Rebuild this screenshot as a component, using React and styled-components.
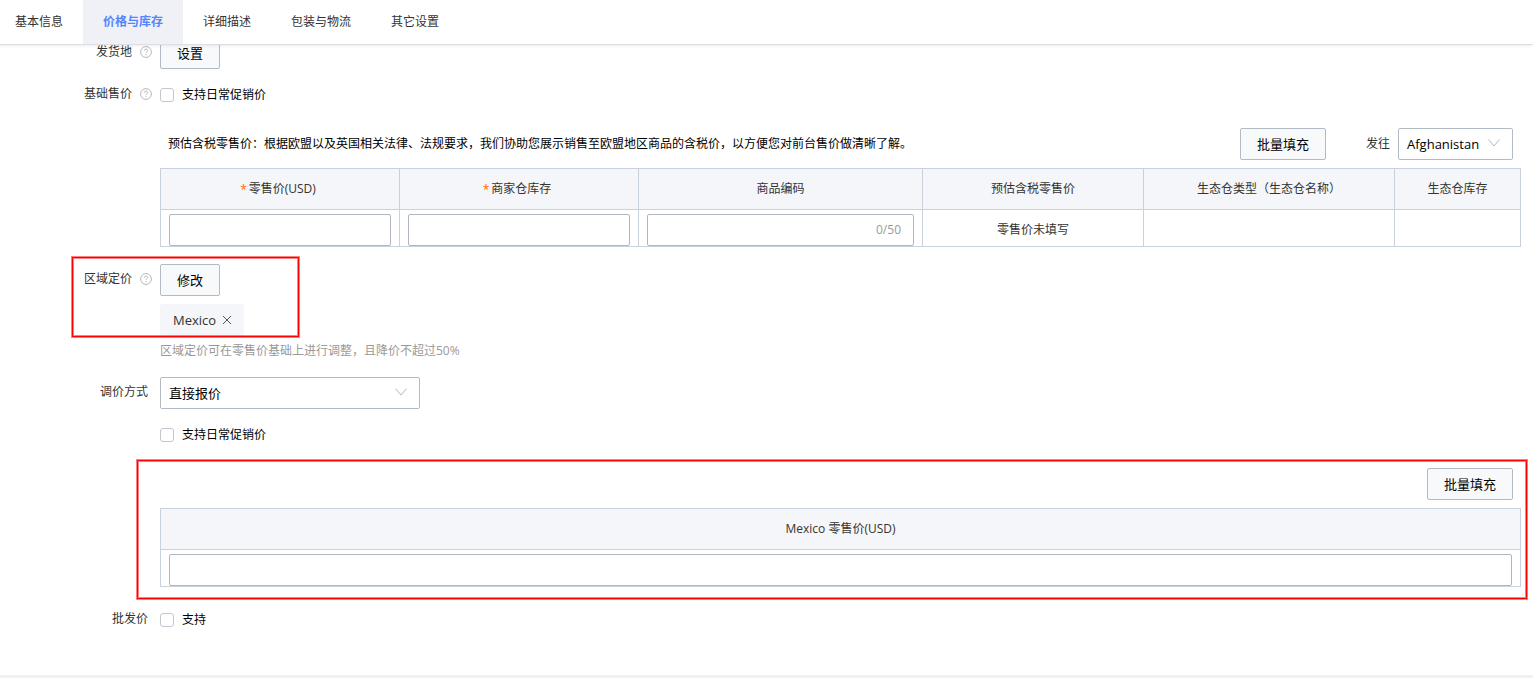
import React, { useState } from 'react';
import styled, { createGlobalStyle } from 'styled-components';

const GlobalStyle = createGlobalStyle`
  * {
    box-sizing: border-box;
  }

  body {
    margin: 0;
    background: #fff;
    color: #333;
    font-family: 'Open Sans', 'Noto Sans CJK SC', sans-serif;
    font-size: 12px;
    line-height: 18px;
  }

  button, input, select {
    font-family: inherit;
  }
`;

const tabs = ['基本信息', '价格与库存', '详细描述', '包装与物流', '其它设置'];

const columns = [
  { title: '零售价(USD)', width: 239, required: true, input: true },
  { title: '商家仓库存', width: 239, required: true, input: true },
  { title: '商品编码', width: 284, input: true, maxLength: 50 },
  { title: '预估含税零售价', width: 221, text: '零售价未填写' },
  { title: '生态仓类型（生态仓名称）', width: 251 },
  { title: '生态仓库存', width: 126 },
];

const regionColumns = [{ title: 'Mexico 零售价(USD)', width: 1360, input: true }];

const HelpIcon = () => (
  <svg width="12" height="12" viewBox="0 0 12 12" fill="none" stroke="#b8b8b8" aria-hidden="true">
    <circle cx="6" cy="6" r="5.4" />
    <path d="M4.3 4.8c0-1 .7-1.7 1.7-1.7s1.700.7 1.700 1.500c0 1.200-1.700 1.200-1.700 2.500" />
    <path d="M6 8v1.100" />
  </svg>
);

const CloseIcon = () => (
  <svg width="10" height="10" viewBox="0 0 10 10" stroke="#555" aria-hidden="true">
    <path d="M1 1l8 8M9 1l-8 8" />
  </svg>
);

const ArrowIcon = () => (
  <svg width="12" height="8" viewBox="0 0 12 8" fill="none" stroke="#b4b7c0" aria-hidden="true">
    <path d="M.5.5L6 7l5.500-6.500" />
  </svg>
);

const Field = ({ label, help, htmlFor, dense, children }) => (
  <FieldRow $dense={dense}>
    <FieldLabel $help={help} as={htmlFor ? 'label' : 'div'} htmlFor={htmlFor}>
      {label}
      {help && <HelpIcon />}
    </FieldLabel>
    <FieldBody>{children}</FieldBody>
  </FieldRow>
);

const Check = ({ children }) => {
  const [checked, setChecked] = useState(false);

  return (
    <CheckLabel>
      <Checkbox type="checkbox" checked={checked} onChange={(e) => setChecked(e.target.checked)} />
      {children}
    </CheckLabel>
  );
};

const Dropdown = ({ id, options, width }) => (
  <SelectWrap $width={width}>
    <Select id={id}>
      {options.map((option) => (
        <option key={option}>{option}</option>
      ))}
    </Select>
    <ArrowIcon />
  </SelectWrap>
);

const CellInput = ({ title, maxLength }) => {
  const [value, setValue] = useState('');

  return (
    <InputBox>
      <Input aria-label={title} maxLength={maxLength} value={value} onChange={(e) => setValue(e.target.value)} />
      {maxLength && <Counter>{value.length}/{maxLength}</Counter>}
    </InputBox>
  );
};

const PriceTable = ({ cols }) => (
  <Table>
    <colgroup>
      {cols.map((col) => (
        <col key={col.title} width={col.width} />
      ))}
    </colgroup>
    <thead>
      <tr>
        {cols.map((col) => (
          <Th key={col.title} $required={col.required}>
            {col.required && <Star>*</Star>}
            {col.title}
          </Th>
        ))}
      </tr>
    </thead>
    <tbody>
      <tr>
        {cols.map((col) => (
          <Td key={col.title}>
            {col.input ? <CellInput title={col.title} maxLength={col.maxLength} /> : col.text}
          </Td>
        ))}
      </tr>
    </tbody>
  </Table>
);

const App = () => {
  const [active, setActive] = useState('价格与库存');
  const [regions, setRegions] = useState(['Mexico']);

  return (
    <>
      <GlobalStyle />
      <TabBar>
        {tabs.map((tab) => (
          <Tab key={tab} type="button" $active={tab === active} onClick={() => setActive(tab)}>
            {tab}
          </Tab>
        ))}
      </TabBar>
      <Page>
        <Field label="发货地" help dense>
          <Button type="button">设置</Button>
        </Field>

        <Field label="基础售价" help>
          <Check>支持日常促销价</Check>
          <Toolbar>
            <Notice>
              预估含税零售价：根据欧盟以及英国相关法律、法规要求，我们协助您展示销售至欧盟地区商品的含税价，以方便您对前台售价做清晰了解。
            </Notice>
            <Button type="button">批量填充</Button>
            <ShipTo>
              <label htmlFor="shipTo">发往</label>
              <Dropdown id="shipTo" width={115} options={['Afghanistan', 'Mexico']} />
            </ShipTo>
          </Toolbar>
          <PriceTable cols={columns} />
        </Field>

        <Field label="区域定价" help>
          <Button type="button">修改</Button>
          <Tags>
            {regions.map((region) => (
              <Tag key={region}>
                {region}
                <TagClose
                  type="button"
                  aria-label={region}
                  onClick={() => setRegions(regions.filter((r) => r !== region))}
                >
                  <CloseIcon />
                </TagClose>
              </Tag>
            ))}
          </Tags>
          <Hint>区域定价可在零售价基础上进行调整，且降价不超过50%</Hint>
          <RegionMark />
        </Field>

        <Field label="调价方式" htmlFor="adjustType">
          <Dropdown id="adjustType" width={260} options={['直接报价', '按比例']} />
          <CheckLine>
            <Check>支持日常促销价</Check>
          </CheckLine>
          <RegionPrices>
            <RegionToolbar>
              <Button type="button">批量填充</Button>
            </RegionToolbar>
            <PriceTable cols={regionColumns} />
            <PriceMark />
          </RegionPrices>
        </Field>

        <Field label="批发价">
          <Check>支持</Check>
        </Field>
      </Page>
    </>
  );
};

const TabBar = styled.nav`
  position: sticky;
  top: 0;
  z-index: 2;
  display: flex;
  height: 45px;
  background: #fff;
  border-bottom: 1px solid #dcdee3;
  box-shadow: 0 1px 3px rgba(0, 0, 0, 0.08);
`;

const Tab = styled.button`
  padding: 0 20px 2px;
  border: 0;
  background: ${({ $active }) => ($active ? '#f0f1f6' : 'transparent')};
  color: ${({ $active }) => ($active ? '#5584ff' : '#333')};
  font-size: 12px;
  font-weight: ${({ $active }) => ($active ? 700 : 400)};
  cursor: pointer;

  &:first-child {
    padding-left: 15px;
  }
`;

/* first row is scrolled partly under the tab bar */
const Page = styled.main`
  margin-top: -8px;
  padding: 0 12px 22px 0;
  border-bottom: 3px solid #f0f0f5;
`;

const FieldRow = styled.div`
  position: relative;
  display: flex;
  align-items: flex-start;
  margin-bottom: ${({ $dense }) => ($dense ? '10px' : '17px')};
`;

const FieldLabel = styled.div`
  display: flex;
  flex: none;
  align-items: center;
  justify-content: flex-end;
  gap: 8px;
  width: 160px;
  height: 30px;
  padding-right: ${({ $help }) => ($help ? '8px' : '12px')};
`;

const FieldBody = styled.div`
  flex: 1;
  min-width: 0;
`;

const Button = styled.button`
  flex: none;
  display: block;
  height: 32px;
  padding: 0 16px 2px;
  border: 1px solid #b1bac5;
  border-radius: 2px;
  background: #f7f9fa;
  color: #000;
  font-size: 13px;
  cursor: pointer;
`;

const CheckLabel = styled.label`
  display: flex;
  align-items: center;
  gap: 8px;
  width: fit-content;
  height: 32px;
  color: #000;
`;

const CheckLine = styled.div`
  margin-top: 10px;
`;

const Checkbox = styled.input`
  appearance: none;
  width: 14px;
  height: 14px;
  margin: 0;
  border: 1px solid #c4c6cf;
  border-radius: 3px;
  background: #fff;

  &:checked {
    background: #5584ff;
  }
`;

const Toolbar = styled.div`
  display: flex;
  align-items: center;
  margin: 17px 8px 8px;
`;

const Notice = styled.div`
  flex: 1;
  color: #000;
`;

const ShipTo = styled.div`
  display: flex;
  align-items: center;
  gap: 8px;
  margin-left: 40px;
`;

const SelectWrap = styled.div`
  position: relative;
  width: ${({ $width }) => $width}px;
  height: 32px;

  svg {
    position: absolute;
    top: 11px;
    right: 13px;
    pointer-events: none;
  }
`;

const Select = styled.select`
  appearance: none;
  width: 100%;
  height: 32px;
  padding: 0 28px 0 8px;
  border: 1px solid #b1bac5;
  border-radius: 2px;
  background: #fff;
  color: #000;
  font-size: 13px;
`;

const Table = styled.table`
  width: 100%;
  table-layout: fixed;
  border-collapse: collapse;
  text-align: center;
`;

const Th = styled.th`
  height: 41px;
  padding: 0 ${({ $required }) => ($required ? '12px' : '8px')} 0 8px;
  border: 1px solid #c8d2de;
  background: #f5f6fa;
  font-weight: 400;
`;

const Td = styled.td`
  height: 37px;
  padding: 4px 8px 0;
  border: 1px solid #c8d2de;
`;

const Star = styled.span`
  margin-right: 2px;
  color: #ff6a00;
  line-height: 12px;
  vertical-align: middle;
`;

const InputBox = styled.div`
  display: flex;
  align-items: center;
  height: 32px;
  border: 1px solid #b1b7c2;
  border-radius: 2px;
`;

const Input = styled.input`
  flex: 1;
  min-width: 0;
  height: 30px;
  padding: 0 8px;
  border: 0;
  outline: 0;
  background: transparent;
  font-size: 12px;
`;

const Counter = styled.span`
  padding-right: 12px;
  color: #999;
`;

const Tags = styled.div`
  display: flex;
  gap: 8px;
  min-height: 32px;
  margin-top: 8px;
`;

const Tag = styled.span`
  display: flex;
  align-items: center;
  gap: 6px;
  height: 32px;
  padding: 0 12px 0 13px;
  border-radius: 3px;
  background: #f5f6fa;
  font-size: 13px;
`;

const TagClose = styled.button`
  display: flex;
  padding: 0;
  border: 0;
  background: none;
  cursor: pointer;
`;

const Hint = styled.div`
  margin-top: 6px;
  color: #999;
`;

const RegionPrices = styled.div`
  position: relative;
  margin-top: 17px;
`;

const RegionToolbar = styled.div`
  display: flex;
  justify-content: flex-end;
  margin: 0 8px 8px;
`;

const Mark = styled.div`
  position: absolute;
  border: 1px solid #f00;
  box-shadow: 0 0 0 1px rgba(255, 0, 0, 0.5), inset 0 0 0 1px rgba(255, 0, 0, 0.5);
  pointer-events: none;
`;

const RegionMark = styled(Mark)`
  top: -7px;
  left: 72px;
  width: 227px;
  height: 80px;
`;

const PriceMark = styled(Mark)`
  inset: -8px -6px -12px -23px;
`;

export default App;
